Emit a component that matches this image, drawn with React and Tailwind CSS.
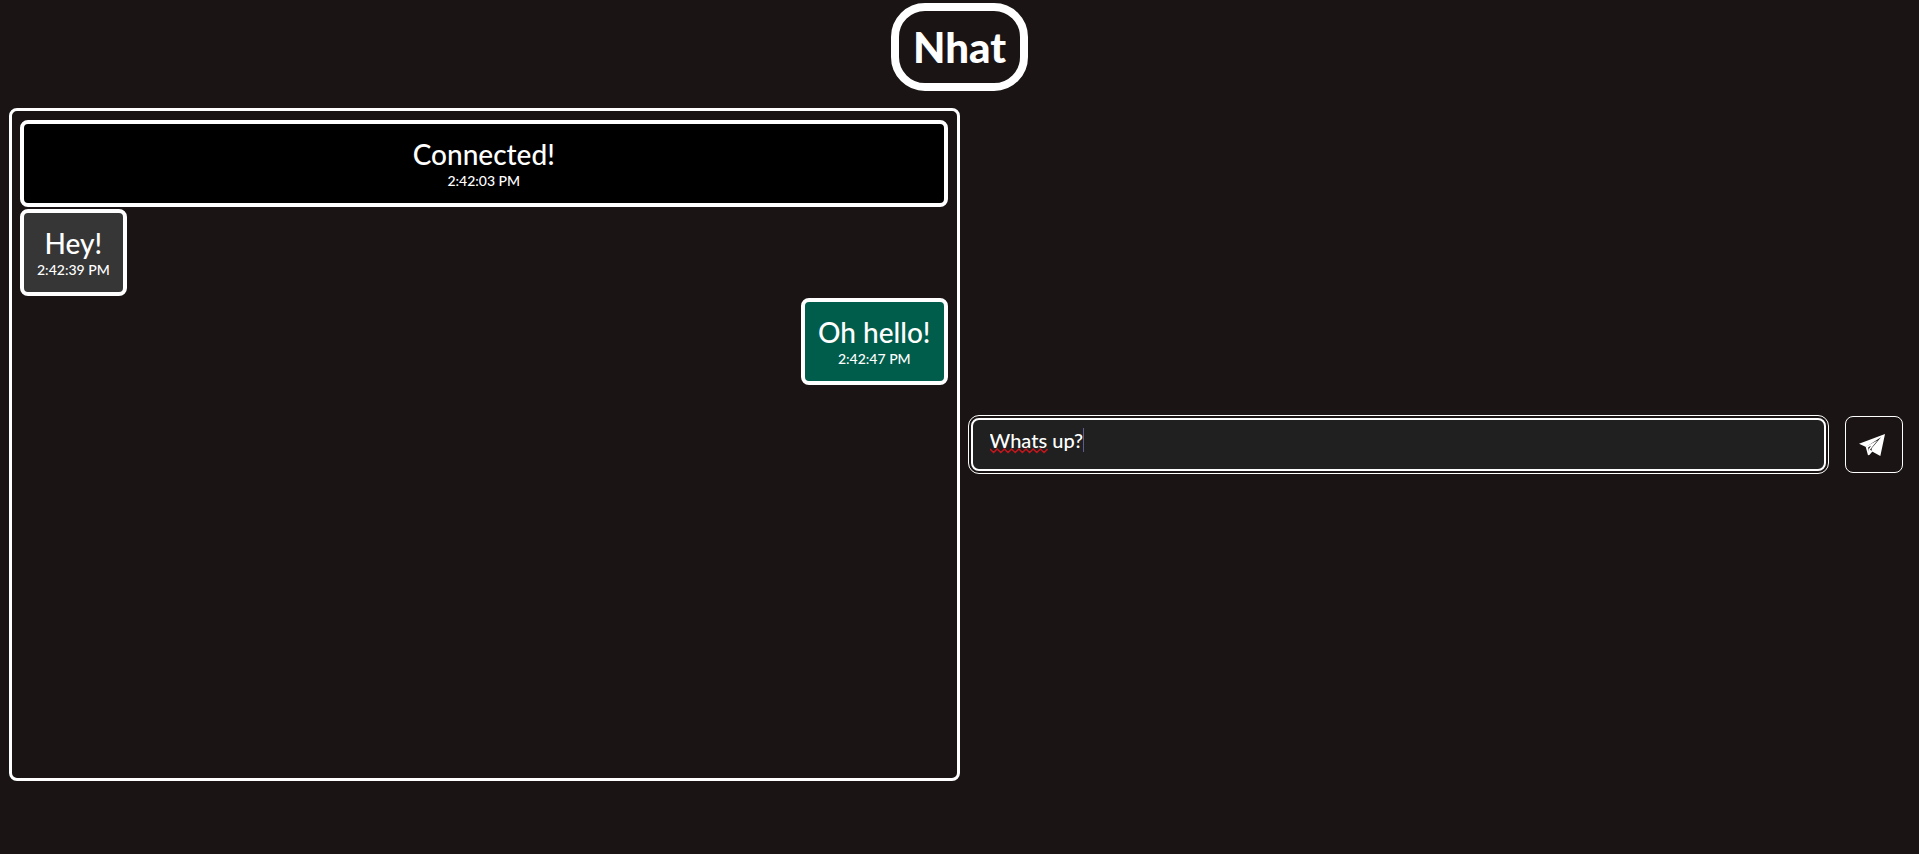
const messages = [
  { text: "Connected!", time: "2:42:03 PM", style: "w-full bg-black" },
  { text: "Hey!", time: "2:42:39 PM", style: "self-start bg-[#363636]" },
  { text: "Oh hello!", time: "2:42:47 PM", style: "self-end bg-[#005c4b]" },
];

function Message({ text, time, style }) {
  return (
    <li className={`rounded-lg border-4 border-white px-[13px] pt-[11px] pb-[14px] text-center font-medium ${style}`}>
      <p className="text-[28px] leading-[38px]">{text}</p>
      <time className="block text-[14px] leading-4">{time}</time>
    </li>
  );
}

function PaperPlane() {
  return (
    <svg viewBox="0 0 78 66" className="h-[22px] w-[26px]" fill="currentColor" aria-hidden="true">
      <path d="M78 0 0 29l21 10L66 10 38 43v9l26 14z" />
      <path d="M20 38 27 64l4-1 10-11-8-5 9-11 14-17z M28 40l8-5-7 11-1 8z" fillRule="evenodd" />
    </svg>
  );
}

function EditMarks() {
  return (
    <span aria-hidden="true" className="pointer-events-none absolute top-2.5 left-[19px] flex h-6">
      <svg className="mt-5 h-1.5 w-[58px]" viewBox="0 0 58 6" fill="none" stroke="#c4161c" strokeWidth="1.5">
        <path d="M0 1l3.6 3.5L7.2 1l3.6 3.5L14.4 1l3.6 3.5L21.6 1l3.6 3.5L28.8 1l3.6 3.5L36 1l3.6 3.5L43.2 1l3.6 3.5L50.4 1l3.6 3.5L57.6 1" />
      </svg>
      <span className="ml-[35px] w-px bg-[#5c5c94]" />
    </span>
  );
}

export default function App() {
  return (
    <div className="flex min-h-screen flex-col bg-[#1a1414] pt-[3px] font-['Gill_Sans','Gill_Sans_MT',Lato,sans-serif] text-white">
      <header className="flex justify-center">
        <h1 className="rounded-[34px] border-8 border-white px-[14px] py-2 text-[42px] leading-14 font-black">Nhat</h1>
      </header>
      <main className="mt-[17px] grid grid-cols-2 items-center">
        <ul className="ml-[9px] flex h-[calc(100vh-181px)] flex-col gap-[2px] overflow-y-auto rounded-lg border-3 border-white py-[9px] pr-[9px] pl-2">
          {messages.map((m) => (
            <Message key={m.time} {...m} />
          ))}
        </ul>
        <form className="flex items-center gap-[19px] pr-4 pl-[11px]" onSubmit={(e) => e.preventDefault()}>
          <div className="relative flex min-w-0 flex-1">
            <input
              aria-label="Message"
              defaultValue="Whats up?"
              spellCheck={false}
              className="h-[53px] w-full rounded-lg border-2 border-white bg-[#212020] px-[17px] pb-2.5 text-[20px] font-medium outline-1 outline-offset-2 outline-white"
            />
            <EditMarks />
          </div>
          <button aria-label="Send" className="flex h-[57px] w-[58px] items-center justify-center rounded-lg border border-white pr-1">
            <PaperPlane />
          </button>
        </form>
      </main>
    </div>
  );
}
